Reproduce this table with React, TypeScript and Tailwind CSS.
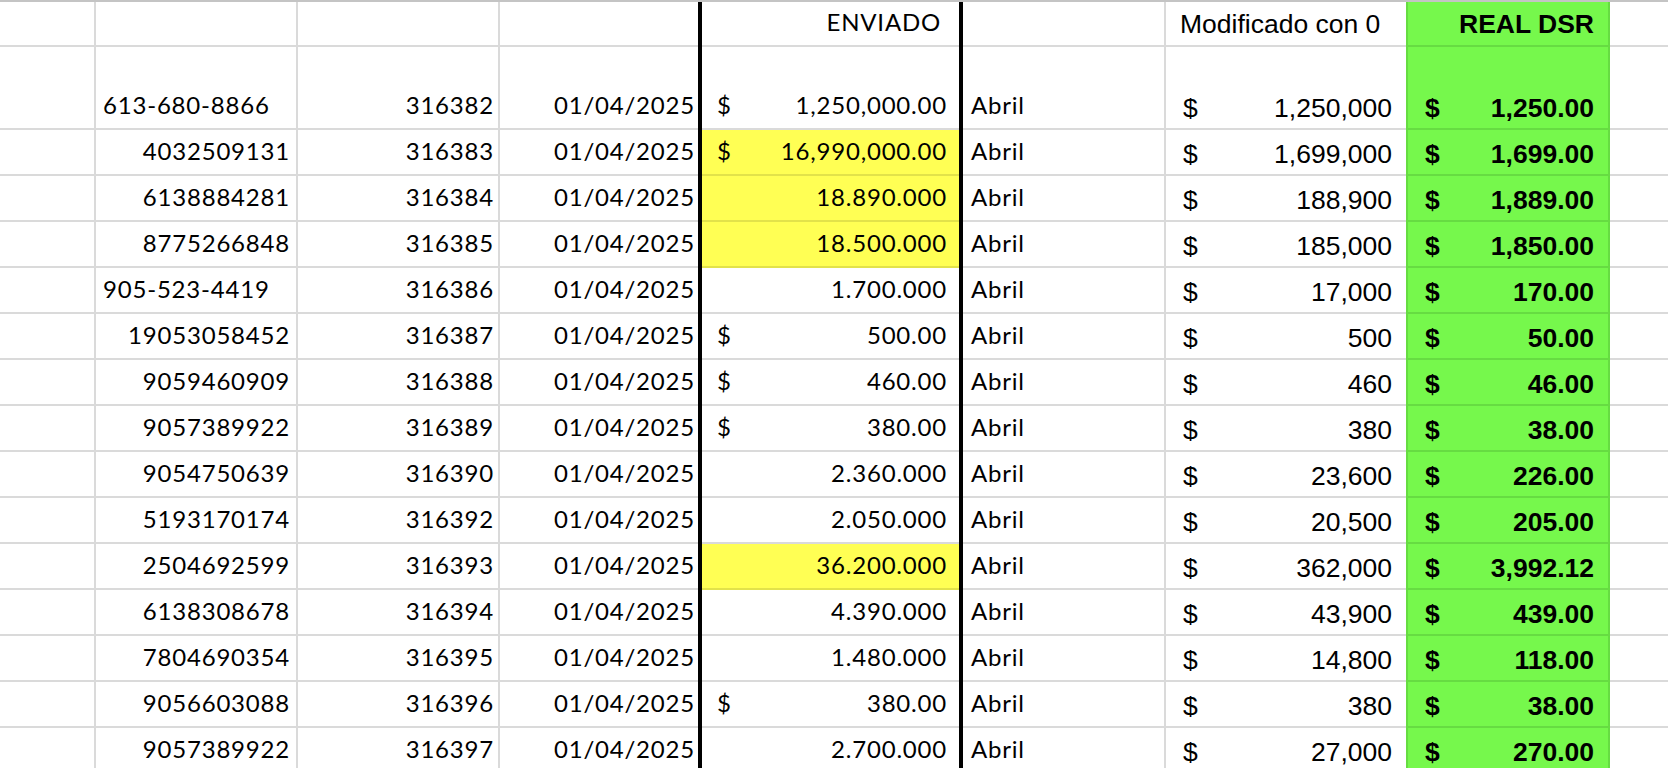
type Fila = {
  tel: string;
  telIzq?: boolean;
  id: string;
  fecha: string;
  signo: boolean;
  enviado: string;
  amarillo?: boolean;
  modificado: string;
  real: string;
};

const filas: Fila[] = [
  { tel: "613-680-8866", telIzq: true, id: "316382", fecha: "01/04/2025", signo: true, enviado: "1,250,000.00", modificado: "1,250,000", real: "1,250.00" },
  { tel: "4032509131", id: "316383", fecha: "01/04/2025", signo: true, enviado: "16,990,000.00", amarillo: true, modificado: "1,699,000", real: "1,699.00" },
  { tel: "6138884281", id: "316384", fecha: "01/04/2025", signo: false, enviado: "18.890.000", amarillo: true, modificado: "188,900", real: "1,889.00" },
  { tel: "8775266848", id: "316385", fecha: "01/04/2025", signo: false, enviado: "18.500.000", amarillo: true, modificado: "185,000", real: "1,850.00" },
  { tel: "905-523-4419", telIzq: true, id: "316386", fecha: "01/04/2025", signo: false, enviado: "1.700.000", modificado: "17,000", real: "170.00" },
  { tel: "19053058452", id: "316387", fecha: "01/04/2025", signo: true, enviado: "500.00", modificado: "500", real: "50.00" },
  { tel: "9059460909", id: "316388", fecha: "01/04/2025", signo: true, enviado: "460.00", modificado: "460", real: "46.00" },
  { tel: "9057389922", id: "316389", fecha: "01/04/2025", signo: true, enviado: "380.00", modificado: "380", real: "38.00" },
  { tel: "9054750639", id: "316390", fecha: "01/04/2025", signo: false, enviado: "2.360.000", modificado: "23,600", real: "226.00" },
  { tel: "5193170174", id: "316392", fecha: "01/04/2025", signo: false, enviado: "2.050.000", modificado: "20,500", real: "205.00" },
  { tel: "2504692599", id: "316393", fecha: "01/04/2025", signo: false, enviado: "36.200.000", amarillo: true, modificado: "362,000", real: "3,992.12" },
  { tel: "6138308678", id: "316394", fecha: "01/04/2025", signo: false, enviado: "4.390.000", modificado: "43,900", real: "439.00" },
  { tel: "7804690354", id: "316395", fecha: "01/04/2025", signo: false, enviado: "1.480.000", modificado: "14,800", real: "118.00" },
  { tel: "9056603088", id: "316396", fecha: "01/04/2025", signo: true, enviado: "380.00", modificado: "380", real: "38.00" },
  { tel: "9057389922", id: "316397", fecha: "01/04/2025", signo: false, enviado: "2.700.000", modificado: "27,000", real: "270.00" },
];

const grid = "grid grid-cols-[96px_202px_202px_198px_4px_257px_4px_203px_240px_204px_1fr]";
const celda = "flex items-end border-b-2 border-[#dadada]";
const izq = "font-['Lato',sans-serif] text-[24px] tracking-[0.8px] leading-none pb-[11px] text-black";
const der = "font-['Liberation_Sans',Arial,sans-serif] text-[26.5px] leading-none pb-[7px] text-black";
const verde = "flex items-end border-b-2 border-l-2 border-r-2 border-[#66dc42] bg-[#76f84c]";

export default function App() {
  return (
    <div className="w-[1668px] h-[768px] overflow-hidden bg-white border-t-2 border-[#c4c4c4]">
      {/* encabezado */}
      <div className={`${grid} h-[45px]`}>
        <div className={`${celda} border-r-2`} />
        <div className={`${celda} border-r-2`} />
        <div className={`${celda} border-r-2`} />
        <div className={celda} />
        <div className="bg-black" />
        <div className={`${celda} justify-end pr-[18px]`}>
          <span className={izq}>ENVIADO</span>
        </div>
        <div className="bg-black" />
        <div className={`${celda} border-r-2`} />
        <div className={`${celda} pl-[14px]`}>
          <span className={`${der} pb-[8px]`}>Modificado con 0</span>
        </div>
        <div className={`${verde} justify-end pr-[14px]`}>
          <span className={`${der} font-bold pb-[8px]`}>REAL DSR</span>
        </div>
        <div className={celda} />
      </div>

      {filas.map((f, i) => (
        <div key={i} className={`${grid} ${i === 0 ? "h-[83px]" : "h-[46px]"}`}>
          <div className={`${celda} border-r-2`} />
          <div className={`${celda} border-r-2 ${f.telIzq ? "justify-start pl-[7px]" : "justify-end pr-[6px]"}`}>
            <span className={izq}>{f.tel}</span>
          </div>
          <div className={`${celda} border-r-2 justify-end pr-[4px]`}>
            <span className={izq}>{f.id}</span>
          </div>
          <div className={`${celda} justify-end pr-[3px]`}>
            <span className={izq}>{f.fecha}</span>
          </div>
          <div className="bg-black" />
          <div
            className={`flex items-end justify-between border-b-2 pl-[15px] pr-[12px] ${
              f.amarillo ? "bg-[#ffff54] border-[#e2e24a]" : "border-[#dadada]"
            }`}
          >
            <span className={izq}>{f.signo ? "$" : ""}</span>
            <span className={izq}>{f.enviado}</span>
          </div>
          <div className="bg-black" />
          <div className={`${celda} border-r-2 pl-[8px]`}>
            <span className={izq}>Abril</span>
          </div>
          <div className={`${celda} justify-between pl-[17px] pr-[14px]`}>
            <span className={der}>$</span>
            <span className={der}>{f.modificado}</span>
          </div>
          <div className={`${verde} justify-between pl-[17px] pr-[14px]`}>
            <span className={`${der} font-bold`}>$</span>
            <span className={`${der} font-bold`}>{f.real}</span>
          </div>
          <div className={celda} />
        </div>
      ))}
    </div>
  );
}
